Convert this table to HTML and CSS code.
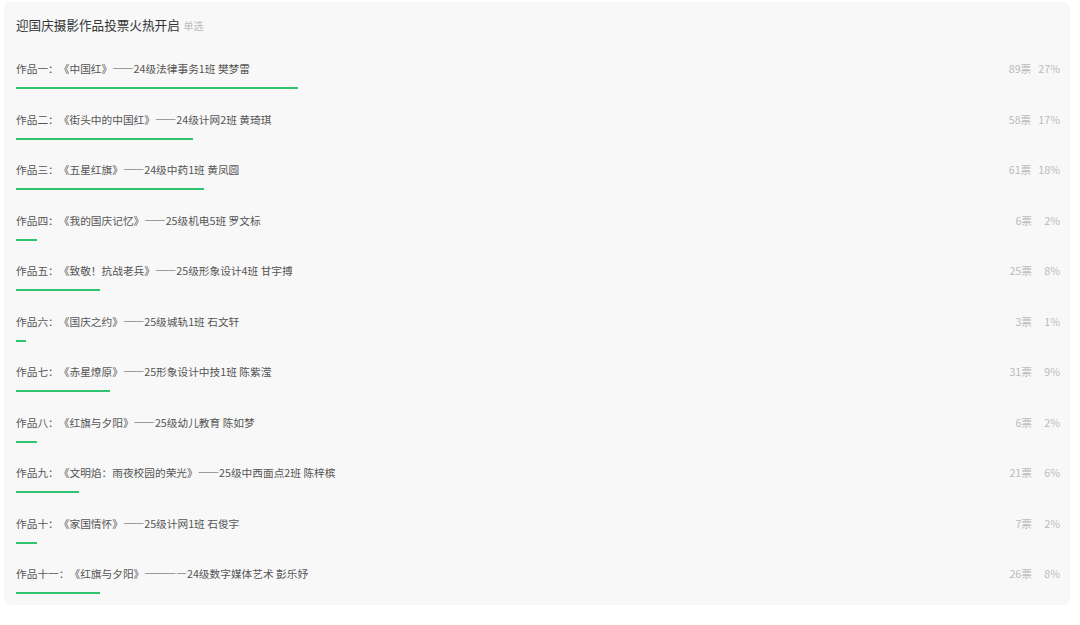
FILE: index.html
```html
<!DOCTYPE html>
<html lang="zh-CN">
<head>
  <meta charset="UTF-8">
  <meta name="viewport" content="width=device-width, initial-scale=1.0">
  <title>迎国庆摄影作品投票火热开启</title>
  <link rel="stylesheet" href="styles.css">
</head>
<body>
  <div class="card">
    <h2 class="title">迎国庆摄影作品投票火热开启 <span class="tag">单选</span></h2>
    <ul class="options">
      <li class="option">
        <div class="line"><span class="name">作品一：《中国红》——24级法律事务1班 樊梦雷</span><span class="stat"><span class="votes">89票</span><span class="pct">27%</span></span></div>
        <div class="bar" style="width: 27%"></div>
      </li>
      <li class="option">
        <div class="line"><span class="name">作品二：《街头中的中国红》——24级计网2班 黄琦琪</span><span class="stat"><span class="votes">58票</span><span class="pct">17%</span></span></div>
        <div class="bar" style="width: 17%"></div>
      </li>
      <li class="option">
        <div class="line"><span class="name">作品三：《五星红旗》——24级中药1班 黄凤圆</span><span class="stat"><span class="votes">61票</span><span class="pct">18%</span></span></div>
        <div class="bar" style="width: 18%"></div>
      </li>
      <li class="option">
        <div class="line"><span class="name">作品四：《我的国庆记忆》——25级机电5班 罗文标</span><span class="stat"><span class="votes">6票</span><span class="pct">2%</span></span></div>
        <div class="bar" style="width: 2%"></div>
      </li>
      <li class="option">
        <div class="line"><span class="name">作品五：《致敬！抗战老兵》——25级形象设计4班 甘宇搏</span><span class="stat"><span class="votes">25票</span><span class="pct">8%</span></span></div>
        <div class="bar" style="width: 8%"></div>
      </li>
      <li class="option">
        <div class="line"><span class="name">作品六：《国庆之约》——25级城轨1班 石文轩</span><span class="stat"><span class="votes">3票</span><span class="pct">1%</span></span></div>
        <div class="bar" style="width: 1%"></div>
      </li>
      <li class="option">
        <div class="line"><span class="name">作品七：《赤星燎原》——25形象设计中技1班 陈紫滢</span><span class="stat"><span class="votes">31票</span><span class="pct">9%</span></span></div>
        <div class="bar" style="width: 9%"></div>
      </li>
      <li class="option">
        <div class="line"><span class="name">作品八：《红旗与夕阳》——25级幼儿教育 陈如梦</span><span class="stat"><span class="votes">6票</span><span class="pct">2%</span></span></div>
        <div class="bar" style="width: 2%"></div>
      </li>
      <li class="option">
        <div class="line"><span class="name">作品九：《文明焰：雨夜校园的荣光》——25级中西面点2班 陈梓槟</span><span class="stat"><span class="votes">21票</span><span class="pct">6%</span></span></div>
        <div class="bar" style="width: 6%"></div>
      </li>
      <li class="option">
        <div class="line"><span class="name">作品十：《家国情怀》——25级计网1班 石俊宇</span><span class="stat"><span class="votes">7票</span><span class="pct">2%</span></span></div>
        <div class="bar" style="width: 2%"></div>
      </li>
      <li class="option">
        <div class="line"><span class="name">作品十一：《红旗与夕阳》————24级数字媒体艺术 彭乐妤</span><span class="stat"><span class="votes">26票</span><span class="pct">8%</span></span></div>
        <div class="bar" style="width: 8%"></div>
      </li>
    </ul>
  </div>
</body>
</html>
```

FILE: styles.css
```css
body {
  margin: 0;
  background: #fff;
  font-family: "Noto Sans CJK SC", "Noto Sans", sans-serif;
  color: #555;
  text-spacing-trim: space-all;
}

.card {
  margin: 2px 10px 0 4px;
  padding: 13px 10px 3px 12px;
  background: #f8f8f8;
  border-radius: 6px;
}

.title {
  margin: 0;
  font-size: 12.6px;
  line-height: 20px;
  font-weight: normal;
  color: #333;
}

.tag {
  font-size: 10px;
  color: #bbb;
  margin-left: 1px;
}

.options {
  list-style: none;
  margin: 10px 0 0;
  padding: 0;
}

.option {
  height: 50.5px;
  box-sizing: border-box;
  padding-top: 15px;
}

.line {
  display: flex;
  justify-content: space-between;
  align-items: center;
  height: 16px;
  font-size: 10.7px;
  line-height: 16px;
}

.stat {
  display: flex;
  color: #bbb;
}

.pct {
  min-width: 21px;
  margin-left: 7px;
  text-align: right;
}

.bar {
  height: 2px;
  margin-top: 10px;
  background: #2fc46f;
}
```
